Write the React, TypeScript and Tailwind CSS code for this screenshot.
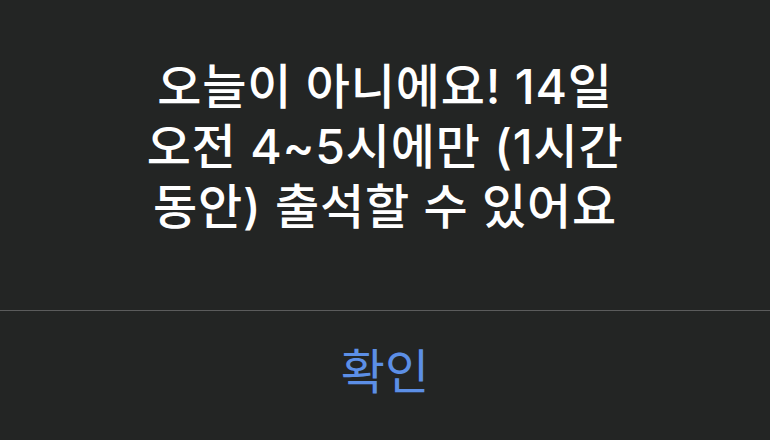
export default function App() {
  return (
    <div className="w-[770px] h-[440px] bg-[#232524] flex flex-col font-['Inter','Noto_Sans_CJK_KR',sans-serif]">
      {/* Message */}
      <div className="h-[310px] flex items-center justify-center pb-4">
        <p className="text-white text-[48px] font-medium tracking-[0.8px] leading-[60px] text-center w-[600px]">
          오늘이 아니에요! 14일
          <br />
          오전 4~5시에만 (1시간
          <br />
          동안) 출석할 수 있어요
        </p>
      </div>

      <div className="h-px bg-[#5b5c5c]" />

      {/* Action */}
      <button className="flex-1 flex items-center justify-center text-[#5c8fe6] text-[48px] leading-none pb-2">
        확인
      </button>
    </div>
  );
}
